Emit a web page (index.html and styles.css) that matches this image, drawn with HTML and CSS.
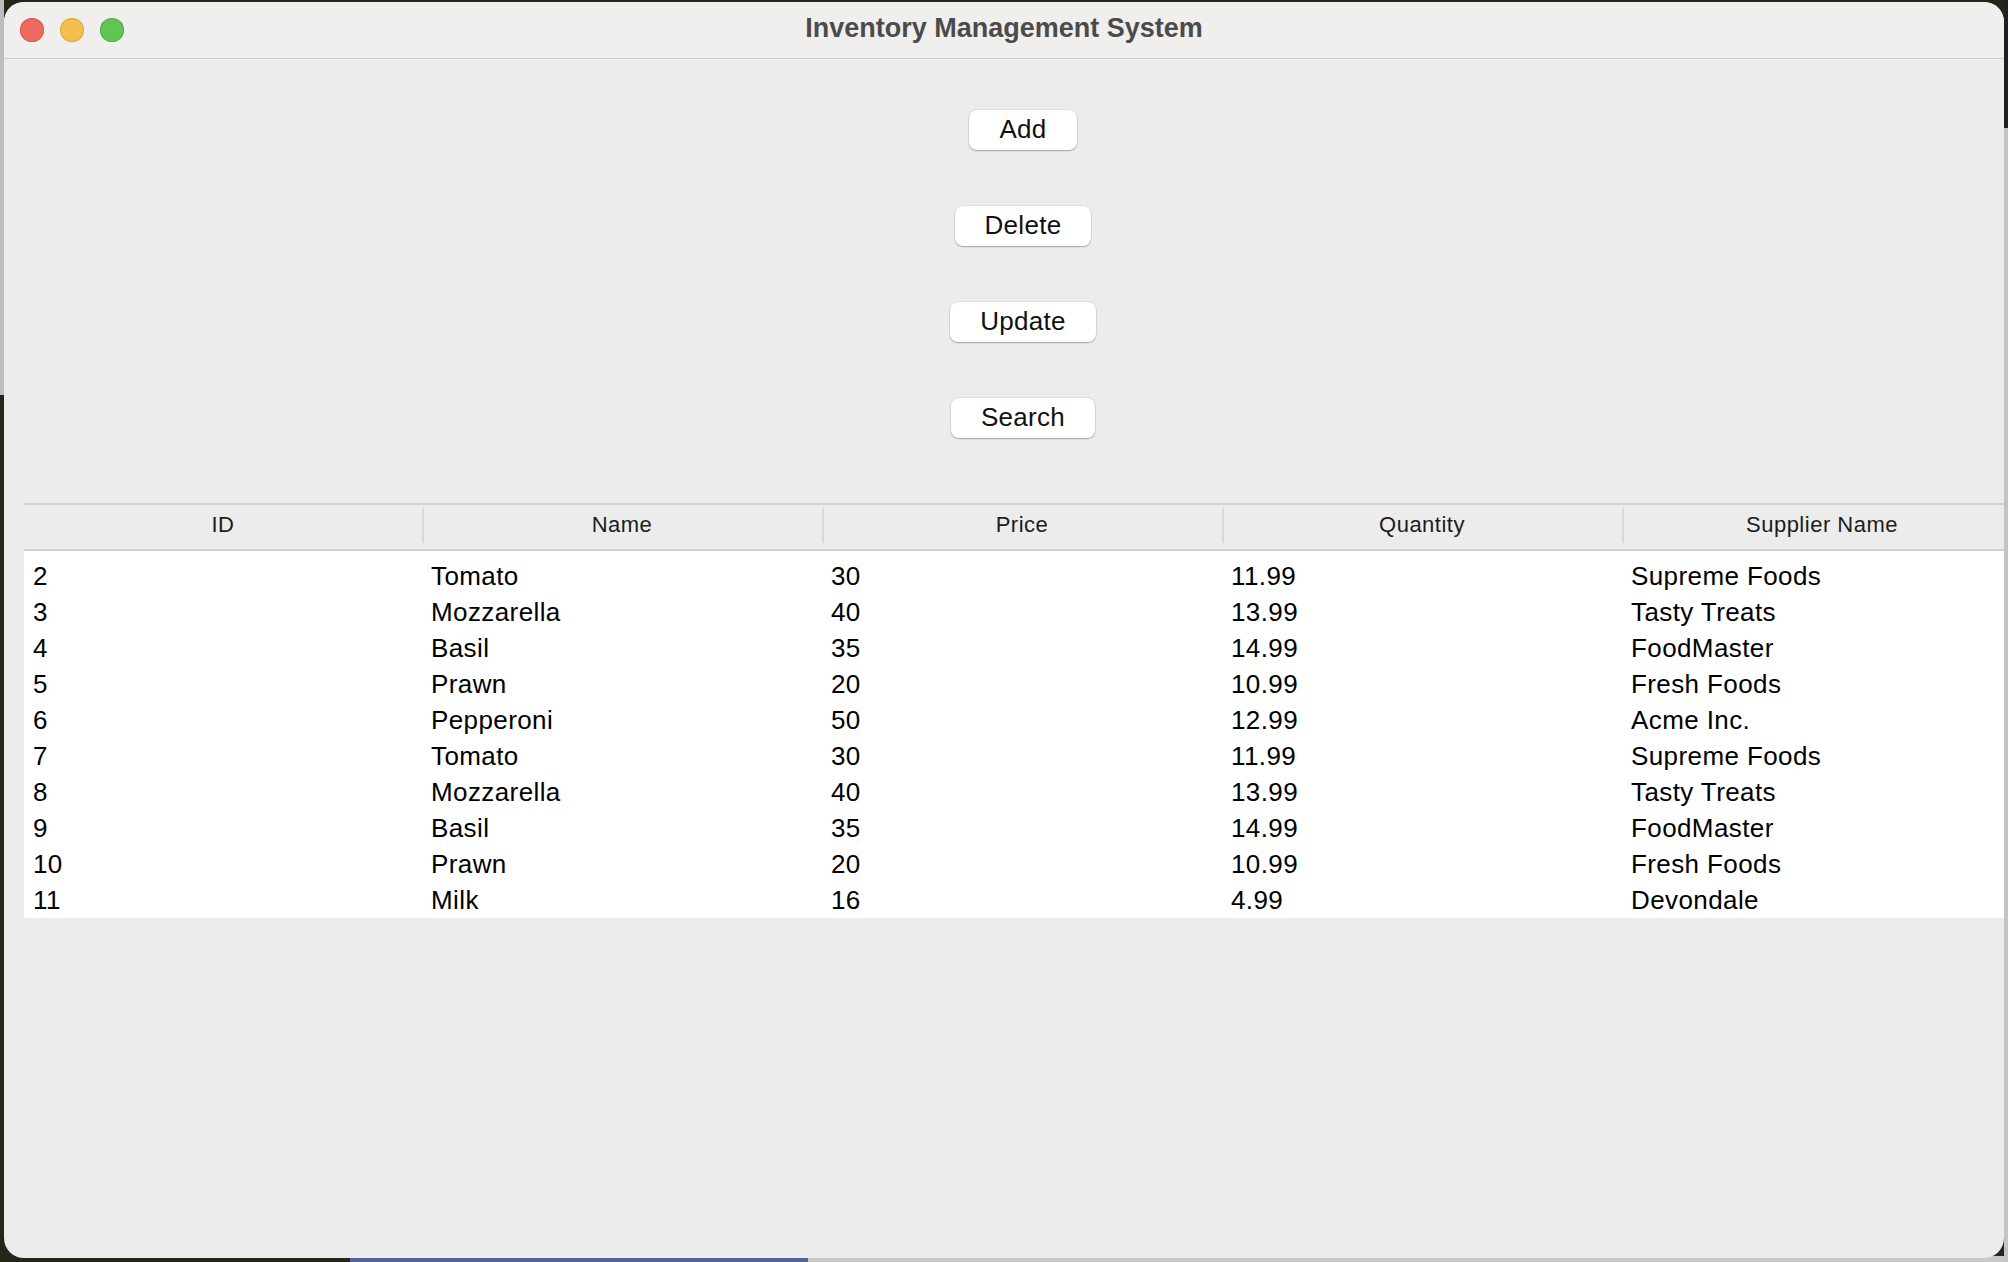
FILE: index.html
```html
<!DOCTYPE html>
<html lang="en">
<head>
<meta charset="utf-8">
<title>Inventory Management System</title>
<link rel="stylesheet" href="styles.css">
</head>
<body>
<div class="window">
  <header class="titlebar">
    <div class="lights">
      <span class="light red"></span>
      <span class="light yellow"></span>
      <span class="light green"></span>
    </div>
    <div class="title">Inventory Management System</div>
  </header>
  <main class="content">
    <div class="actions">
      <button class="btn">Add</button>
      <button class="btn">Delete</button>
      <button class="btn">Update</button>
      <button class="btn">Search</button>
    </div>
    <div class="table">
      <div class="thead">
        <div class="th">ID</div>
        <div class="th">Name</div>
        <div class="th">Price</div>
        <div class="th">Quantity</div>
        <div class="th">Supplier Name</div>
      </div>
      <div class="tbody">
        <div class="tr"><div class="td">2</div><div class="td">Tomato</div><div class="td">30</div><div class="td">11.99</div><div class="td">Supreme Foods</div></div>
        <div class="tr"><div class="td">3</div><div class="td">Mozzarella</div><div class="td">40</div><div class="td">13.99</div><div class="td">Tasty Treats</div></div>
        <div class="tr"><div class="td">4</div><div class="td">Basil</div><div class="td">35</div><div class="td">14.99</div><div class="td">FoodMaster</div></div>
        <div class="tr"><div class="td">5</div><div class="td">Prawn</div><div class="td">20</div><div class="td">10.99</div><div class="td">Fresh Foods</div></div>
        <div class="tr"><div class="td">6</div><div class="td">Pepperoni</div><div class="td">50</div><div class="td">12.99</div><div class="td">Acme Inc.</div></div>
        <div class="tr"><div class="td">7</div><div class="td">Tomato</div><div class="td">30</div><div class="td">11.99</div><div class="td">Supreme Foods</div></div>
        <div class="tr"><div class="td">8</div><div class="td">Mozzarella</div><div class="td">40</div><div class="td">13.99</div><div class="td">Tasty Treats</div></div>
        <div class="tr"><div class="td">9</div><div class="td">Basil</div><div class="td">35</div><div class="td">14.99</div><div class="td">FoodMaster</div></div>
        <div class="tr"><div class="td">10</div><div class="td">Prawn</div><div class="td">20</div><div class="td">10.99</div><div class="td">Fresh Foods</div></div>
        <div class="tr"><div class="td">11</div><div class="td">Milk</div><div class="td">16</div><div class="td">4.99</div><div class="td">Devondale</div></div>
      </div>
    </div>
  </main>
</div>
</body>
</html>
```
FILE: styles.css
```css
* { box-sizing: border-box; }

html, body {
  margin: 0;
  padding: 0;
  width: 2008px;
  height: 1262px;
  overflow: hidden;
}

body {
  background:
    linear-gradient(to bottom, #bdbdbd 0, #bdbdbd 395px, transparent 395px) left top / 4px 100% no-repeat,
    linear-gradient(to bottom, #1f2024 0, #1f2024 128px, #c4c4c4 128px) right top / 4px 100% no-repeat,
    linear-gradient(to right, transparent 0, transparent 350px, #4e6796 350px, #4e6796 808px, #c8c8c8 808px) left bottom / 100% 6px no-repeat,
    #24261a;
  font-family: "Liberation Sans", Arial, sans-serif;
  padding: 2px 4px 4px 4px;
}

.window {
  width: 2000px;
  height: 1256px;
  background: #ececec;
  border-radius: 20px;
  overflow: hidden;
  display: flex;
  flex-direction: column;
}

.titlebar {
  position: relative;
  height: 57px;
  flex: none;
  background: #f0efed;
  border-bottom: 1px solid #cfcecc;
  display: flex;
  align-items: center;
}

.lights {
  display: flex;
  gap: 16px;
  padding-left: 16px;
  padding-bottom: 1px;
}

.light {
  width: 24px;
  height: 24px;
  border-radius: 50%;
  display: block;
}
.light.red { background: #ee6a5f; box-shadow: inset 0 0 0 1px #d95b50; }
.light.yellow { background: #f5bf50; box-shadow: inset 0 0 0 1px #dfa83b; }
.light.green { background: #61c555; box-shadow: inset 0 0 0 1px #4faf43; }

.title {
  position: absolute;
  left: 0;
  right: 0;
  top: 0;
  text-align: center;
  font-weight: bold;
  font-size: 27px;
  line-height: 52px;
  color: #4b4b4b;
}

.content {
  flex: 1;
  padding-top: 51px;
}

.actions {
  display: flex;
  flex-direction: column;
  align-items: center;
  gap: 56px;
  padding-left: 38px;
}

.btn {
  height: 40px;
  padding: 0 30px 2px 30px;
  border: none;
  border-radius: 8px;
  background: #ffffff;
  box-shadow: 0 1px 1.5px rgba(0,0,0,0.28), 0 0 0 0.5px rgba(0,0,0,0.10);
  font-family: "Liberation Sans", Arial, sans-serif;
  font-size: 26px;
  line-height: 38px;
  letter-spacing: 0.3px;
  color: #111;
}

.table {
  margin-top: 65px;
  margin-left: 20px;
  width: 1998px;
}

.thead {
  display: grid;
  grid-template-columns: 398px 400px 400px 400px 400px;
  border-top: 2px solid #d2d2d2;
  border-bottom: 2px solid #d0d0d0;
  height: 48px;
  background: #ececec;
}

.th {
  position: relative;
  text-align: center;
  font-size: 22px;
  line-height: 40px;
  letter-spacing: 0.5px;
  padding-bottom: 4px;
  color: #1c1c1c;
}

.th + .th::before {
  content: "";
  position: absolute;
  left: 0;
  top: 3px;
  bottom: 6px;
  width: 2px;
  background: #d8d8d8;
}

.tbody {
  background: #ffffff;
  padding: 7px 0 0 0;
}

.tr {
  display: grid;
  grid-template-columns: 398px 400px 400px 400px 400px;
  height: 36px;
}

.td {
  font-size: 26px;
  line-height: 36px;
  letter-spacing: 0.4px;
  padding-left: 9px;
  color: #000;
  white-space: nowrap;
}
```
